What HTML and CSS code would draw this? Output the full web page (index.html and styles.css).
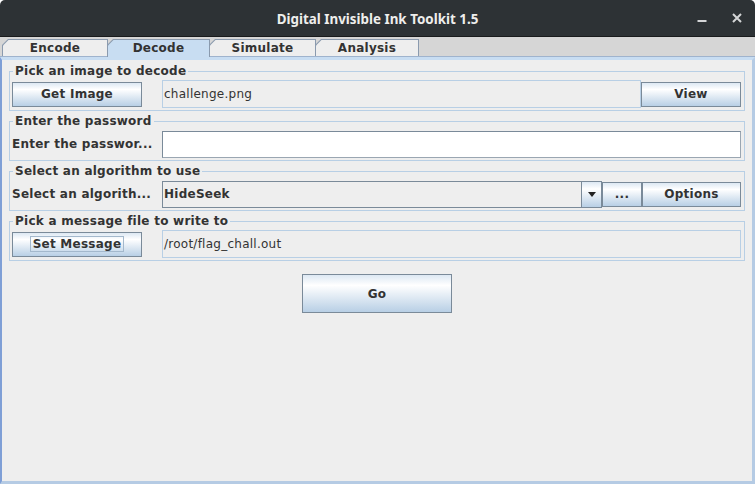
FILE: index.html
```html
<!DOCTYPE html>
<html>
<head>
<meta charset="utf-8">
<title>Digital Invisible Ink Toolkit 1.5</title>
<link rel="stylesheet" href="styles.css">
</head>
<body>
<div class="window">
  <div class="titlebar">
    <div></div>
    <div class="title">Digital Invisible Ink Toolkit 1.5</div>
    <div class="controls">
      <svg class="ctl" width="16" height="16" viewBox="0 0 16 16"><rect x="3.5" y="10" width="9" height="2" fill="#d4d6d7"/></svg>
      <svg class="ctl" width="16" height="16" viewBox="0 0 16 16"><path d="M4 4 L12 12 M12 4 L4 12" stroke="#d4d6d7" stroke-width="2" fill="none"/></svg>
    </div>
  </div>
  <div class="tabs">
    <div class="tab w-encode"><div class="tab-inner">Encode</div></div>
    <div class="tab w-decode selected"><div class="tab-inner">Decode</div></div>
    <div class="tab w-simulate"><div class="tab-inner">Simulate</div></div>
    <div class="tab w-analysis"><div class="tab-inner">Analysis</div></div>
  </div>
  <div class="panel">
    <fieldset class="group">
      <legend>Pick an image to decode</legend>
      <div class="row">
        <button class="btn w-side">Get Image</button>
        <div class="field ro grow push">challenge.png</div>
        <button class="btn w-view">View</button>
      </div>
    </fieldset>
    <fieldset class="group">
      <legend>Enter the password</legend>
      <div class="row">
        <div class="label">Enter the passwor...</div>
        <div class="field pw grow"></div>
      </div>
    </fieldset>
    <fieldset class="group">
      <legend>Select an algorithm to use</legend>
      <div class="row">
        <div class="label">Select an algorith...</div>
        <div class="combo">
          <div class="combo-value">HideSeek</div>
          <div class="combo-arrow"><svg width="8" height="5" viewBox="0 0 8 5"><polygon points="0,0 8,0 4,5" fill="#222"/></svg></div>
        </div>
        <button class="btn w-dots">...</button>
        <button class="btn grow">Options</button>
      </div>
    </fieldset>
    <fieldset class="group">
      <legend>Pick a message file to write to</legend>
      <div class="row">
        <button class="btn w-side"><span class="focus">Set Message</span></button>
        <div class="field ro grow push">/root/flag_chall.out</div>
      </div>
    </fieldset>
    <div class="go-row">
      <button class="btn go">Go</button>
    </div>
  </div>
</div>
</body>
</html>
```
FILE: styles.css
```css
html, body {
  margin: 0;
  padding: 0;
  background: #ffffff;
}

.window {
  width: 755px;
  height: 484px;
  display: flex;
  flex-direction: column;
  font-family: "DejaVu Sans", "Liberation Sans", sans-serif;
  font-size: 12px;
  letter-spacing: 0.25px;
  color: #333333;
  overflow: hidden;
}

/* title bar */
.titlebar {
  height: 36px;
  border-bottom: 1px solid #191b1c;
  background: #2d3235;
  border-radius: 5px 5px 0 0;
  display: grid;
  grid-template-columns: 1fr auto 1fr;
  align-items: center;
}

.title {
  font-family: "Noto Sans", "DejaVu Sans", sans-serif;
  font-weight: bold;
  font-size: 13.4px;
  letter-spacing: 0;
  color: #eeeeec;
  padding-top: 1px;
}

.controls {
  justify-self: end;
  display: flex;
  align-items: center;
  gap: 19px;
  padding-right: 10px;
}

.ctl {
  display: block;
}

/* tabs */
.tabs {
  height: 19px;
  background: #d6d6d6;
  border-bottom: 1px solid #9fb3cd;
  display: flex;
  align-items: flex-end;
  padding-left: 2px;
}

.tab {
  height: 17px;
  margin-right: -1px;
  background: #8a9aae;
  clip-path: polygon(6px 0, 100% 0, 100% 100%, 0 100%, 0 6px);
  display: flex;
  position: relative;
}

.tab-inner {
  flex: 1;
  margin: 1px 1px 0 1px;
  background: #eeeeee;
  clip-path: polygon(5.5px 0, 100% 0, 100% 100%, 0 100%, 0 5.5px);
  display: flex;
  align-items: center;
  justify-content: center;
  font-weight: bold;
  color: #333333;
}

.tab.selected {
  height: 18px;
  margin-bottom: -1px;
  z-index: 1;
}

.tab.selected .tab-inner {
  background: #c8ddf2;
  padding-bottom: 1px;
}

.w-encode { width: 106px; }
.w-decode { width: 103px; }
.w-simulate { width: 107px; }
.w-analysis { width: 104px; }

/* panel */
.panel {
  flex: 1;
  background: #eeeeee;
  border-top: 3px solid #c8ddf2;
  border-left: 2px solid #7f9fd6;
  border-right: 3px solid #b5cbe4;
  border-bottom: 3px solid #b5cbe4;
  padding: 4px 7px 0 7px;
  display: flex;
  flex-direction: column;
  gap: 3px;
}

.group {
  margin: 0;
  padding: 2px 3px 2px 2px;
  border: 1px solid #b8cfe5;
  min-inline-size: 0;
}

.group legend {
  margin-left: 1px;
  padding: 0 2px;
  font-weight: bold;
  font-size: 12px;
  line-height: 14px;
  color: #333333;
}

.row {
  height: 28px;
  display: flex;
  align-items: center;
}

.grow {
  flex: 1;
}

.push {
  margin-left: 20px;
}

.label {
  width: 150px;
  font-weight: bold;
  white-space: nowrap;
}

/* buttons */
.btn {
  box-sizing: border-box;
  height: 25px;
  padding: 0;
  margin: 0;
  border: 1px solid #7a8a99;
  background: linear-gradient(#dde8f3 0%, #ffffff 28%, #b8cfe5 100%);
  font-family: "DejaVu Sans", "Liberation Sans", sans-serif;
  font-weight: bold;
  font-size: 12px;
  letter-spacing: 0.25px;
  color: #333333;
  display: flex;
  align-items: center;
  justify-content: center;
}

.w-side { width: 130px; }
.w-view { width: 100px; }
.w-dots { width: 40px; }

.focus {
  border: 1px solid #a3b8cc;
  padding: 0 2px;
  line-height: 14px;
}

/* fields */
.field {
  box-sizing: border-box;
  height: 28px;
  display: flex;
  align-items: center;
  padding-left: 1px;
  white-space: nowrap;
}

.field.ro {
  background: #eeeeee;
  border: 1px solid #b8cfe5;
}

.field.pw {
  height: 27px;
  background: #ffffff;
  border: 1px solid #7a8a99;
  border-right-color: #9aa6b2;
  border-bottom-color: #9aa6b2;
}

.combo {
  box-sizing: border-box;
  width: 440px;
  height: 27px;
  border: 1px solid #7a8a99;
  background: #eeeeee;
  display: flex;
}

.combo-value {
  flex: 1;
  display: flex;
  align-items: center;
  padding-left: 1px;
  font-weight: bold;
}

.combo-arrow {
  width: 19px;
  border-left: 1px solid #7a8a99;
  background: linear-gradient(#dde8f3 0%, #ffffff 28%, #b8cfe5 100%);
  display: flex;
  align-items: center;
  justify-content: center;
}

.combo-arrow svg {
  display: block;
}

.go-row {
  display: flex;
  justify-content: center;
  padding-top: 10px;
}

.btn.go {
  width: 150px;
  height: 39px;
}
```
